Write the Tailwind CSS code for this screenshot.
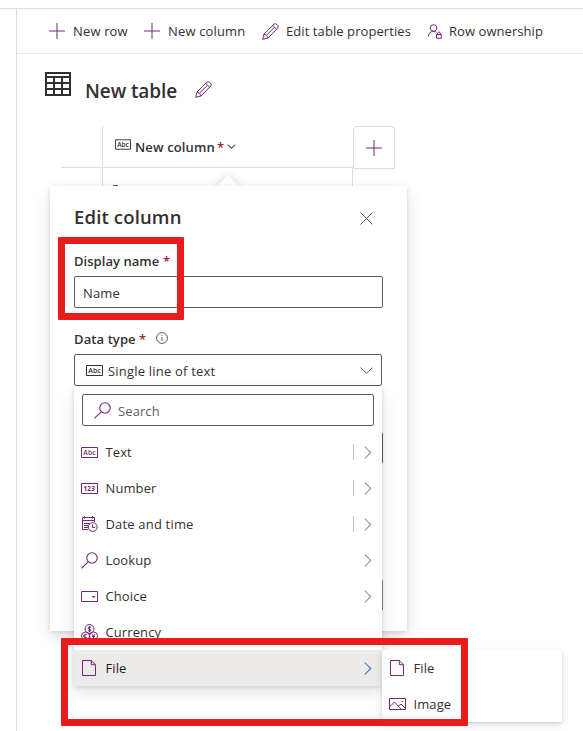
<!DOCTYPE html>
<html lang="en">
<head>
<meta charset="utf-8">
<title>New table</title>
<script src="https://cdn.jsdelivr.net/npm/@tailwindcss/browser@4"></script>
</head>
<body class="relative flex h-[731px] w-[583px] flex-col overflow-hidden bg-white font-['Open_Sans','Noto_Sans',sans-serif] text-[13px] leading-5 text-[#323130]">
<svg class="hidden">
  <symbol id="plus" viewBox="0 0 16 16"><path d="M0 8H16M8 0V16" stroke="currentColor" fill="none"/></symbol>
  <symbol id="pencil" viewBox="0 0 17 17"><g stroke="currentColor" fill="none"><path d="M.7 16.3 2 11 12 1.2Q13.2.1 14.8 1.4L15.6 2.2Q16.8 3.8 15.8 5L6 15Z"/><path d="M10.8 2.5 14.5 6.2M2 11Q5 11.5 6 15M4.6 12.1 12.4 4.4"/></g></symbol>
  <symbol id="search" viewBox="0 0 17 17"><g stroke="currentColor" fill="none" stroke-width="1.1"><circle cx="11" cy="6" r="5.2"/><path d="M7.2 9.8.4 16.4"/></g></symbol>
  <symbol id="abc" viewBox="0 0 17 11"><path d="M.5.5H16.5V10.5H.5Z" fill="none" stroke="currentColor"/><text x="2.3" y="8" font-size="7" font-weight="600" textLength="12.4" lengthAdjust="spacingAndGlyphs" fill="currentColor">Abc</text></symbol>
  <symbol id="right" viewBox="0 0 8 13"><path d="M.8.6 6.8 6.5.8 12.4" fill="none" stroke="currentColor" stroke-width="1.1"/></symbol>
  <symbol id="file" viewBox="0 0 14 16"><path d="M.5.5H9.3L13.5 4.7V15.5H.5ZM9.3.5V4.7H13.5" fill="none" stroke="currentColor"/></symbol>
</svg>

<div class="h-[9px] shrink-0 border-b border-[#dcdcdc]"></div>
<main class="ml-4 grow border-l border-[#dcdcdc]">
  <header class="flex h-[45px] items-center border-b border-[#e5e5e5] pl-8 tracking-[.06px] whitespace-nowrap">
    <svg class="mr-2 size-4 shrink-0 text-[#742774]"><use href="#plus"/></svg><span class="w-[71px] tracking-[.15px]">New row</span>
    <svg class="mr-2 size-4 shrink-0 text-[#742774]"><use href="#plus"/></svg><span class="w-[94px] tracking-[.15px]">New column</span>
    <svg class="mr-[7px] size-[17px] shrink-0 text-[#742774]"><use href="#pencil"/></svg><span class="w-[142px] tracking-[.08px]">Edit table properties</span>
    <svg class="mr-[7px] h-[15px] w-[14px] shrink-0 text-[#742774]" viewBox="0 0 14 15" fill="none" stroke="currentColor"><circle cx="5.5" cy="4" r="3.3"/><path d="M.5 12.5Q.7 7.6 5.5 7.4 7.3 7.4 8.4 8.4M8.5 10.5H13.3V14.3H8.5ZM9.5 10.5V9Q10.9 6.6 12.3 9V10.5"/></svg><span>Row ownership</span>
  </header>

  <section class="flex items-start pt-[18px] pl-7">
    <svg class="h-6 w-[26px]" viewBox="0 0 26 24" fill="none" stroke="#323130" stroke-width="2"><path d="M1 1H25V23H1ZM1 5H25M1 11H25M1 17H25M9 5V23M17 5V23"/></svg>
    <h1 class="mt-[5px] ml-[14px] w-[110px] text-[19px] leading-7 font-semibold tracking-[-.08px] whitespace-nowrap">New table</h1>
    <svg class="mt-[9px] size-[17px] text-[#742774]"><use href="#pencil"/></svg>
  </section>

  <section class="mt-[21px] ml-11 flex items-start">
    <div class="w-[292px]">
      <div class="flex h-[42px] border-b border-[#dcdcdc]">
        <div class="w-[42px] border-r border-[#dcdcdc]"></div>
        <div class="flex items-center pl-3 whitespace-nowrap">
          <svg class="mr-1 mb-1 h-[11px] w-4" preserveAspectRatio="none"><use href="#abc"/></svg>
          <span class="w-[82px] font-semibold tracking-[.12px]">New column</span><span class="w-[10px] font-semibold text-[#a4262c]">*</span>
          <svg class="h-[5px] w-[9px]" viewBox="0 0 9 5"><path d="M.7.6 4.5 4.3 8.3.6" fill="none" stroke="#605e5c" stroke-width="1.2"/></svg>
        </div>
      </div>
      <div class="flex h-[22px] border-r border-[#dcdcdc]"><div class="w-[42px] border-r border-[#dcdcdc]"></div><div class="mt-[17px] ml-[10px] h-px w-[5px] bg-[#605e5c]"></div></div>
    </div>
    <button class="flex h-[43px] w-[42px] items-center justify-center rounded-t border border-[#dcdcdc] text-[#742774]"><svg class="size-4"><use href="#plus"/></svg></button>
  </section>
</main>

<div class="absolute top-[178px] left-[220px] size-[16px] rotate-45 bg-white shadow-[0_0_8px_rgba(0,0,0,.16)]"></div>
<section class="absolute top-[186px] left-[50px] h-[445px] w-[357px] bg-white px-6 shadow-[0_6px_14px_rgba(0,0,0,.13),0_1px_4px_rgba(0,0,0,.11)]">
  <div class="flex h-[65px] items-center justify-between pr-[10px]">
    <h2 class="-mt-[3px] text-[18.5px] leading-7 font-semibold tracking-[.15px] whitespace-nowrap">Edit column</h2>
    <svg class="size-[13px]" viewBox="0 0 13 13"><path d="M.5.5 12.5 12.5M12.5.5.5 12.5" stroke="#605e5c" fill="none"/></svg>
  </div>
  <div class="h-[25px] font-semibold whitespace-nowrap"><span class="inline-block w-[89px] tracking-[.04px]">Display name</span><span class="text-[#a4262c]">*</span></div>
  <div class="flex h-8 items-center rounded-[2px] border border-[#605e5c] pt-[2px] pl-2 tracking-[.15px]">Name</div>
  <div class="flex h-[46px] items-center pt-4 font-semibold whitespace-nowrap"><span class="w-[65px] tracking-[.1px]">Data type</span><span class="w-[17px] text-[#a4262c]">*</span>
    <svg class="mb-[3px] size-3" viewBox="0 0 12 12" fill="none" stroke="#484644" stroke-width=".9"><circle cx="6" cy="6" r="5.4"/><path d="M6 5V9M6 3V4"/></svg></div>
  <div class="flex h-8 w-[308px] items-center rounded-[2px] border border-[#605e5c] pr-2 pl-[11px]">
    <svg class="mr-[5px] h-[11px] w-[17px]"><use href="#abc"/></svg><span class="grow pt-[2px] tracking-[.2px]">Single line of text</span>
    <svg class="h-[7px] w-[13px]" viewBox="0 0 13 7"><path d="M.6.6 6.5 6.3 12.4.6" fill="none" stroke="#605e5c"/></svg>
  </div>
  <div class="mt-[46px] h-8 rounded-[2px] border border-[#605e5c]"></div>
  <div class="mt-[115px] h-8 rounded-[2px] border border-[#8a8886]"></div>
</section>

<section class="absolute top-[386px] left-[74px] h-[300px] w-[308px] bg-white tracking-[.1px] shadow-[0_6px_14px_rgba(0,0,0,.13),0_1px_4px_rgba(0,0,0,.11)]">
  <div class="mx-2 mt-2 mb-2 flex h-8 items-center rounded-[2px] border border-[#605e5c] pl-[11px] text-[#605e5c]"><svg class="mr-[7px] size-[17px] text-[#742774]"><use href="#search"/></svg><span class="pt-[2px]">Search</span></div>
  <ul>
    <li class="flex h-9 items-center pr-[10px] pl-[7px]"><svg class="mr-[7.5px] h-[11px] w-[17px] text-[#742774]"><use href="#abc"/></svg><span class="grow">Text</span><i class="mr-[10px] h-4 w-px bg-[#c8c6c4]"></i><svg class="h-[13px] w-2 text-[#979593]"><use href="#right"/></svg></li>
    <li class="flex h-9 items-center pr-[10px] pl-[7px]"><svg class="mr-[7.5px] h-[11px] w-[17px] text-[#742774]" viewBox="0 0 17 11"><path d="M.5.5H16.5V10.5H.5Z" fill="none" stroke="currentColor"/><text x="2.5" y="8" font-size="6.8" font-weight="700" textLength="11.5" lengthAdjust="spacingAndGlyphs" fill="currentColor">123</text></svg><span class="grow">Number</span><i class="mr-[10px] h-4 w-px bg-[#c8c6c4]"></i><svg class="h-[13px] w-2 text-[#979593]"><use href="#right"/></svg></li>
    <li class="flex h-9 items-center pr-[10px] pl-[7px]"><svg class="mr-[7.5px] h-4 w-[17px] text-[#742774]" viewBox="0 0 17 16" fill="none" stroke="currentColor"><path d="M7 13.5H1.5V1.5H13.5V6M1.5 4.5H13.5M3.5 0V2.5M11.5 0V2.5M3 7.5H9M3 9.5H7M3 11.5H7"/><circle cx="11.7" cy="11" r="4.4"/><path d="M11.5 8.3V11.5H14"/></svg><span class="grow tracking-[.18px]">Date and time</span><i class="mr-[10px] h-4 w-px bg-[#c8c6c4]"></i><svg class="h-[13px] w-2 text-[#979593]"><use href="#right"/></svg></li>
    <li class="flex h-9 items-center pr-[10px] pl-[7px]"><svg class="mr-[7.5px] size-[17px] text-[#742774]"><use href="#search"/></svg><span class="grow">Lookup</span><svg class="h-[13px] w-2 text-[#979593]"><use href="#right"/></svg></li>
    <li class="flex h-9 items-center pr-[10px] pl-[7px]"><svg class="mr-[7.5px] h-[11px] w-[17px] text-[#742774]" viewBox="0 0 17 11"><path d="M.5.5H16.5V10.5H.5Z" fill="none" stroke="currentColor"/><path d="M10.5 5H14.5L12.5 7Z" fill="currentColor"/></svg><span class="grow">Choice</span><svg class="h-[13px] w-2 text-[#979593]"><use href="#right"/></svg></li>
    <li class="flex h-9 items-center pr-[10px] pl-[7px]"><svg class="mr-[7.5px] size-[17px] text-[#742774]" viewBox="0 0 17 17" fill="none" stroke="currentColor"><circle cx="8.5" cy="5" r="4.5"/><circle cx="4.5" cy="12" r="4"/><circle cx="12.5" cy="12" r="4"/><path d="M10.2 3.3Q7 2.2 7 4 7 5 8.5 5 10.3 5.2 10 6.3 9.5 7.8 6.8 6.6M8.5 1.7V8.3M6 10.3Q3 9.6 3 12T6 13.7M2 12H5M11 10 12.5 12 14 10M12.5 12V15M11 12.5H14"/></svg><span class="grow">Currency</span></li>
    <li class="flex h-9 items-center bg-[#edebe9] pr-[10px] pl-2 text-[#201f1e]"><svg class="mr-[9.5px] h-4 w-[14px] text-[#742774]"><use href="#file"/></svg><span class="grow">File</span><svg class="h-[13px] w-2 text-[#3b76b8]"><use href="#right"/></svg></li>
  </ul>
</section>

<ul class="absolute top-[650px] left-[382px] h-[72px] w-[180px] bg-white tracking-[.1px] shadow-[0_3px_7px_rgba(0,0,0,.13),0_1px_2px_rgba(0,0,0,.11)]">
  <li class="flex h-9 items-center pl-2"><svg class="mr-[9.5px] h-4 w-[14px] text-[#742774]"><use href="#file"/></svg>File</li>
  <li class="flex h-9 items-center pl-[7px]"><svg class="mr-[7.5px] h-3 w-[17px] text-[#742774]" viewBox="0 0 17 12" fill="none" stroke="currentColor"><path d="M.5.5H16.5V11.5H.5ZM.5 9 5.5 4 12.5 11.5M9.5 8 12 6 16.5 10.5M12.5 3.5H14"/></svg>Image</li>
</ul>

<div class="absolute top-[237px] left-[58px] h-[83px] w-[126px] rounded-[1px] border-7 border-[#e81c1c]"></div>
<div class="absolute top-[638px] left-[61px] h-[88px] w-[407px] rounded-[1px] border-7 border-[#e81c1c]"></div>
</body>
</html>
